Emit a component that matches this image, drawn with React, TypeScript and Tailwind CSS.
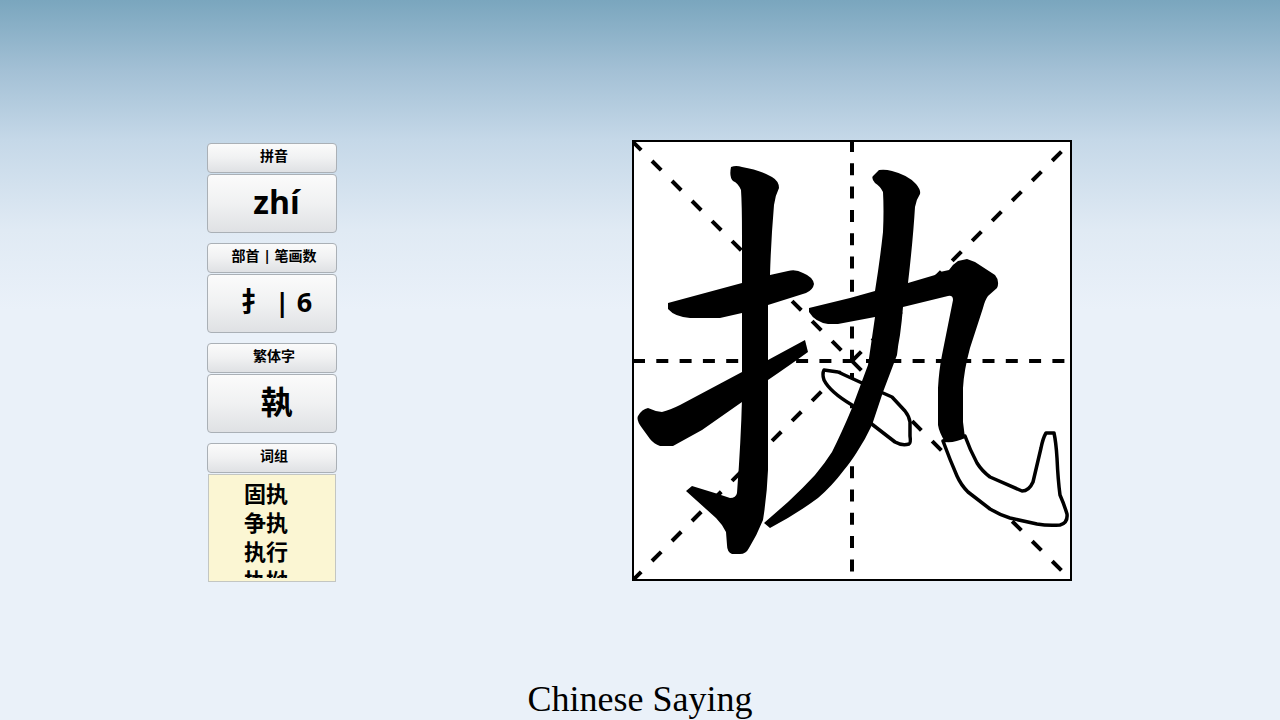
const cjk = "font-['Open_Sans','Noto_Sans_CJK_SC',sans-serif] font-bold text-black";

const btn =
  "flex items-center justify-center rounded-[4px] border border-[#aab0b6] bg-gradient-to-b from-[#fbfbfb] via-[#f0f1f2] to-[#dfe1e4]";

function Label({ text }: { text: string }) {
  return <div className={`${btn} ${cjk} h-[30px] pb-[4px] pl-[4px] text-[14px] leading-none`}>{text}</div>;
}

function Value({ text, size }: { text: string; size: string }) {
  return <div className={`${btn} ${cjk} ${size} mt-px h-[59px] pb-[4px] pl-[9px] leading-none`}>{text}</div>;
}

// the character being taught, traced from the picture in page coordinates
function Glyph() {
  return (
    <svg viewBox="634 142 436 437" className="block h-full w-full">
      <g fill="none" stroke="#000" strokeWidth="4">
        <path d="M632 141L1071 580" strokeDasharray="13 15.3" />
        <path d="M632 581L1071 142" strokeDasharray="13 15.3" />
        <path d="M852 140V581" strokeDasharray="12 11.3" />
        <path d="M633 361H1072" strokeDasharray="12 11.3" />
      </g>
      <g fill="#fff" stroke="#000" strokeWidth="3.5" strokeLinejoin="round">
        <path d="M873 425L895 442Q902 446 909 444Q911 443 910 436V422Q909 416 905 411L892 397L883 393L862 383L838 372L824 370Q822 374 824 380Q830 392 852 405Z" />
        <path d="M943 441Q950 460 957 476Q961 485 968 492L990 509Q1000 515 1010 518L1037 524Q1048 526 1060 525Q1068 523 1067 514Q1064 504 1060 495Q1058 480 1057 458Q1056 442 1054 433H1046Q1043 438 1041 448L1033 482Q1029 491 1022 491L990 477Q982 471 977 463Q970 450 965 436Z" />
      </g>
      <g fill="#000">
        <path d="M731 167Q736 165 742 167Q760 170 772 177Q779 181 779 188Q775 196 774 205Q771 240 770 275L788 271Q796 269 803 273Q813 277 814 284Q813 290 806 293L768 305L768 470Q767 495 763 520Q757 535 749 548Q746 554 740 554L732 554Q727 552 727 545L726 532Q722 524 716 518L686 491L692 486L718 494L730 498Q736 498 737 493Q741 440 742 398L742 313L720 318L690 318Q675 317 668 309L668 303L742 283L742 235Q742 205 741 190Q738 183 733 181Q729 177 731 167Z" />
        <path d="M805 340L808 352Q790 365 768 380L742 402L702 430L673 446L660 446Q654 444 650 439L642 428Q636 420 638 416Q642 409 648 408Q654 411 662 412Q670 410 680 405L742 372L768 360Z" />
        <path d="M809 308L850 298L875 291Q880 260 883 232Q884 210 883 192Q880 186 875 183Q871 178 873 176L879 170Q885 169 892 171Q908 175 916 184Q921 190 920 194Q916 200 915 207Q913 240 908 283L935 275L940 272L949 270Q953 264 958 261L967 259L975 262L995 275Q1000 281 997 288L988 296Q985 300 983 308L970 348Q964 370 963 388L963 422L965 438Q955 443 945 442Q939 432 938 425L938 388Q939 370 942 355L953 300Q953 295 948 296L903 307Q902 320 900 335Q898 345 897 355L883 392L872 425Q865 440 857 452Q850 463 844 470Q832 486 818 498Q795 515 770 528L764 523L788 502Q803 488 815 475Q825 463 832 452Q842 432 852 408L868 365L875 317L838 324L828 324Q815 322 809 312Z" />
      </g>
    </svg>
  );
}

export default function App() {
  return (
    <div className="flex h-[720px] w-[1280px] flex-col overflow-hidden bg-[linear-gradient(to_bottom,#7aa6be_0px,#a3c0d5_70px,#c5d8e8_140px,#e0eaf4_230px,#eaf1f9_310px)]">
      <div className="flex items-start pl-[207px] pt-[140px]">
        <div className="mt-[3px] flex w-[130px] flex-col">
          <Label text="拼音" />
          <Value text="zhí" size="text-[32px]" />
          <div className="h-[10px]" />
          <Label text="部首 | 笔画数" />
          <Value text="扌 | 6" size="text-[27px]" />
          <div className="h-[10px]" />
          <Label text="繁体字" />
          <Value text="執" size="text-[32px]" />
          <div className="h-[10px]" />
          <Label text="词组" />
          <div className="mx-px mt-px h-[108px] border border-[#c3c6c2] bg-[#fbf6d3] pl-[35px] pt-[4px]">
            <div className={`${cjk} h-[99px] overflow-hidden text-[22px] leading-[29px]`}>
              <div>固执</div>
              <div>争执</div>
              <div>执行</div>
              <div>执拗</div>
            </div>
          </div>
        </div>
        <div className="ml-[295px] h-[441px] w-[440px] border-2 border-black bg-white">
          <Glyph />
        </div>
      </div>
      <div className="mt-auto text-center font-['Liberation_Serif',serif] text-[36px] leading-[42px] text-black">
        Chinese Saying
      </div>
    </div>
  );
}
